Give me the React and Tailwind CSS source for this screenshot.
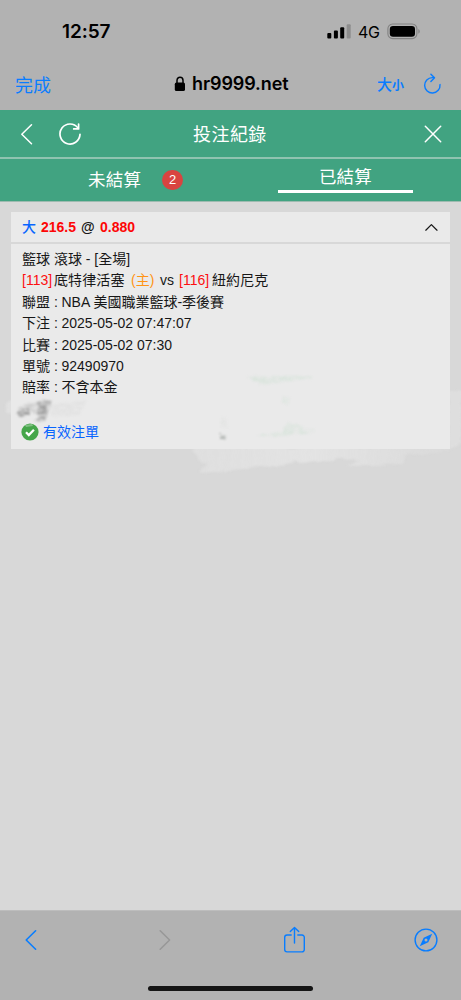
import React from "react";

const stroke = { fill: "none", stroke: "currentColor", strokeLinecap: "round", strokeLinejoin: "round" };

function StatusBar() {
  return (
    <div className="flex h-[62px] items-center pl-[62px] text-black">
      <span className="w-[265px] pt-[2px] font-[Inter,sans-serif] text-[19px] leading-6 font-semibold tracking-[-0.1px] whitespace-nowrap">12:57</span>
      <svg className="h-4 w-[25px] shrink-0" viewBox="0 0 25 16" fill="currentColor">
        <rect x="0.3" y="10" width="4" height="5.5" rx="1" />
        <rect x="6.9" y="7.5" width="4" height="8" rx="1" />
        <rect x="13.2" y="4.2" width="4" height="11.3" rx="1" />
        <rect x="19.7" y="1.2" width="4" height="14.3" rx="1" fill="#8d8d8d" />
      </svg>
      <span className="ml-[6px] w-[29px] pt-px font-[Inter,sans-serif] text-[16px] leading-5 font-normal tracking-[-0.3px]">4G</span>
      <svg className="h-[17px] w-[35px] shrink-0" viewBox="0 0 35 17">
        <rect x="0.9" y="1" width="29" height="14.6" rx="4.8" fill="none" stroke="#828282" strokeWidth="1.1" />
        <rect x="2.8" y="2.9" width="25.2" height="10.8" rx="3.2" fill="#000" />
        <path d="M31.4 6v4.8c1.8-.8 1.8-4 0-4.8z" fill="#828282" />
      </svg>
    </div>
  );
}

function AddressBar() {
  return (
    <div className="flex h-12 items-center pb-[4px] pl-[15px] font-['Noto_Sans_CJK_TC',sans-serif] text-[#0a7dff]">
      <span className="w-[159px] pb-px text-[18px] leading-6">完成</span>
      <svg className="h-[16px] w-[12px] shrink-0 text-black" viewBox="0 0 12 16">
        <path d="M3 7V4.4a3 3.2 0 0 1 6 0V7" {...stroke} strokeWidth="1.5" />
        <rect x="0.8" y="6.6" width="10.2" height="8.4" rx="1.6" fill="currentColor" />
      </svg>
      <span className="ml-[6px] w-[185px] font-[Inter,sans-serif] text-[18px] leading-6 font-semibold tracking-[-0.1px] text-black">hr9999.net</span>
      <span className="flex w-[46px] items-baseline leading-6 font-medium">
        <span className="text-[15px]">大</span>
        <span className="text-[12px] font-bold">小</span>
      </span>
      <svg className="h-[22px] w-[19px] shrink-0" viewBox="0 0 19 22" {...stroke} strokeWidth="1.45">
        <path d="M17 11.6A7.7 7.7 0 1 1 9.3 4.6h1.8" />
        <path d="M7.9 1.3l3.6 3.5-3.6 3.6" />
      </svg>
    </div>
  );
}

function PageHeader() {
  return (
    <header className="flex h-[49px] items-center border-b-2 border-[#8fc3b0] pl-[20px] text-white">
      <svg className="h-6 w-[14px]" viewBox="0 0 14 24" {...stroke} strokeWidth="1.5">
        <path d="M11.5 2.8L1.8 12.2l9.7 9.5" />
      </svg>
      <svg className="ml-[24px] h-6 w-6" viewBox="0 0 24 24" {...stroke} strokeWidth="1.7">
        <path d="M22 12.4A10 10 0 1 1 20 6" />
        <path d="M20.6 2v4.9h-4.9" />
      </svg>
      <h1 className="ml-[111px] w-[231px] pb-[2px] font-['Noto_Sans_CJK_TC',sans-serif] text-[18px] leading-6 tracking-[0.45px] font-normal">投注紀錄</h1>
      <svg className="h-[18px] w-[18px]" viewBox="0 0 18 18" {...stroke} strokeWidth="1.5">
        <path d="M1.3 1.3l15.4 15.4M16.7 1.3L1.3 16.7" />
      </svg>
    </header>
  );
}

function Tabs() {
  return (
    <nav className="flex h-[43px] border-b border-[#9ebbb0] font-['Noto_Sans_CJK_TC',sans-serif] text-[17.5px] text-white">
      <div className="flex w-[230px] items-center pl-[88px]">
        <span className="w-[74px] pb-[3px] leading-6 tracking-[0.25px]">未結算</span>
        <span className="flex h-5 w-[21px] items-center justify-center rounded-full bg-[#d94440] font-['Liberation_Sans',sans-serif] text-[13px] leading-5">2</span>
      </div>
      <div className="flex w-[231px] flex-col items-center pt-[5px]">
        <span className="leading-6 tracking-[0.25px]">已結算</span>
        <span className="mt-[2px] h-[3px] w-[135px] bg-white" />
      </div>
    </nav>
  );
}

const details = [
  ["聯盟", "NBA 美國職業籃球-季後賽"],
  ["下注", "2025-05-02 07:47:07"],
  ["比賽", "2025-05-02 07:30"],
  ["單號", "92490970"],
  ["賠率", "不含本金"],
];

function Smudges() {
  return (
    <svg className="pointer-events-none h-[290px] w-[461px]" viewBox="0 200 461 290">
      <defs>
        <filter id="edge" x="-10%" y="-40%" width="120%" height="180%" colorInterpolationFilters="sRGB">
          <feTurbulence type="fractalNoise" baseFrequency="0.06 0.2" numOctaves="3" seed="7" result="n" />
          <feDisplacementMap in="SourceGraphic" in2="n" scale="7" xChannelSelector="R" yChannelSelector="G" />
          <feGaussianBlur stdDeviation="1" />
        </filter>
        <filter id="grain" x="-20%" y="-40%" width="140%" height="180%" colorInterpolationFilters="sRGB">
          <feTurbulence type="fractalNoise" baseFrequency="0.15 0.4" numOctaves="3" seed="4" result="n" />
          <feDisplacementMap in="SourceGraphic" in2="n" scale="4" xChannelSelector="R" yChannelSelector="G" result="d" />
          <feColorMatrix in="n" type="matrix" values="0 0 0 0 0  0 0 0 0 0  0 0 0 0 0  2 0 0 0 -0.35" result="m" />
          <feComposite in="d" in2="m" operator="in" />
          <feGaussianBlur stdDeviation="0.8" />
        </filter>
        <linearGradient id="fade" x1="0" y1="0" x2="1" y2="0">
          <stop offset="0" stopColor="#e1e1e1" stopOpacity=".75" />
          <stop offset=".45" stopColor="#e3e3e3" />
          <stop offset=".75" stopColor="#e0e0e0" stopOpacity=".8" />
          <stop offset="1" stopColor="#dedede" stopOpacity=".3" />
        </linearGradient>
        <clipPath id="outside">
          <path d="M0 200h461v290H0zM11 212v237h439V212z" clipRule="evenodd" />
        </clipPath>
      </defs>
      <g clipPath="url(#outside)">
        <g filter="url(#edge)">
          <path d="M194 447H452l-4 5-42 3-4 9-54 2 12-7-64 3-22 5-75 5 8-8-9-4z" fill="url(#fade)" />
          <path d="M449 391l9-2 3 3v52l-12 4z" fill="#e0e0e0" opacity=".75" />
          <path d="M6 403l8-5v19l-7-5z" fill="#e2e2e2" opacity=".8" />
        </g>
      </g>
      <g filter="url(#grain)">
        <path d="M20 405l30-5 2 1-5 12-13 1-4-4-12 2z" fill="#b4b4b4" opacity=".55" />
        <path d="M39 401l13-1-4 13-3 8-11 1 3-8z" fill="#8c8c8c" opacity=".75" />
        <path d="M17 411l12-3 1 6-11 3z" fill="#808080" opacity=".8" />
        <path d="M50 405l37-5-8 15-27 1z" fill="#d4d4d4" opacity=".35" />
        <path d="M220 433l5 2 1 4-6-1z" fill="#b0b4b1" />
        <path d="M221 416l5 2 2 10-7-1z" fill="#dfe1e0" opacity=".6" />
        <path d="M246 377l65-2 1 3-22 3-30 4-2-3z" fill="#c9dfcf" opacity=".5" />
        <path d="M256 436l28-5 3-8 15 3 1 4 12-1-2 3-38 4z" fill="#c9dfcf" opacity=".5" />
        <path d="M283 396l7 2-2 7-5-2z" fill="#d6e4da" opacity=".5" />
      </g>
      <path d="M25 425l7-1 1 2-7 1z" fill="#dce8dd" opacity=".4" />
    </svg>
  );
}

function BetCard() {
  return (
    <article className="mx-[11px] bg-[#eaeaea] font-['Liberation_Sans','Noto_Sans_CJK_TC',sans-serif] text-[14px] text-[#171717]">
      <div className="flex h-[32px] items-center border-b-2 border-[#d8d8d8] pl-[11px] font-bold whitespace-nowrap">
        <span className="w-[19px] font-medium text-[#0865ff]">大</span>
        <span className="w-[40px] text-[#fd0606]">216.5</span>
        <span className="w-[19px] text-[14px]">@</span>
        <span className="w-[325px] text-[#fd0606]">0.880</span>
        <svg className="h-[9px] w-[13px]" viewBox="0 0 13 9" {...stroke} strokeWidth="1.25">
          <path d="M0.8 7.2l5.6-5.6 5.6 5.6" />
        </svg>
      </div>
      <div className="flex h-[205px] flex-col pt-[5px] pl-[11px] leading-[21.4px] whitespace-nowrap">
        <div className="h-[21.4px] shrink-0">籃球 滾球 - [全場]</div>
        <div className="flex h-[21.4px] shrink-0">
          <span className="w-[32px] text-[#fd1010]">[113]</span>
          <span className="w-[77px] tracking-[0.1px]">底特律活塞</span>
          <span className="w-[29px] text-[#ff9416]">(主)</span>
          <span className="w-[19px]">vs</span>
          <span className="w-[33px] text-[#fd1010]">[116]</span>
          <span className="tracking-[0.1px]">紐約尼克</span>
        </div>
        {details.map(([label, value]) => (
          <div key={label} className="flex h-[21.4px] shrink-0">
            <span className="w-[32px]">{label}</span>
            <span className="w-[7.5px]">:</span>
            <span>{value}</span>
          </div>
        ))}
        <div className="mt-[23px] flex h-[21.4px] items-center text-[#0865ff]">
          <svg className="-ml-px h-[18px] w-[18px]" viewBox="0 0 18 18">
            <circle cx="9" cy="9" r="8.6" fill="#45a64a" />
            <path d="M5 9.2l2.8 2.8 5.1-5.3" fill="none" stroke="#fff" strokeWidth="2.3" />
          </svg>
          <span className="ml-[4px]">有效注單</span>
        </div>
      </div>
    </article>
  );
}

function BottomBar() {
  return (
    <footer className="h-[90px] border-t border-[#bdbdbd] bg-[#b2b2b2] text-[#087dff]">
      <div className="flex h-[58px] items-center pl-[24px]">
        <svg className="h-[22px] w-[14px]" viewBox="0 0 14 22" {...stroke} strokeWidth="1.6">
          <path d="M11.6 1.8L2.2 11l9.4 9.2" />
        </svg>
        <svg className="ml-[120px] h-[22px] w-[14px] text-[#989898]" viewBox="0 0 14 22" {...stroke} strokeWidth="1.6">
          <path d="M2.2 1.8l9.4 9.2-9.4 9.2" />
        </svg>
        <svg className="ml-[111px] h-[28px] w-[23px]" viewBox="0 0 23 28" {...stroke} strokeWidth="1.4">
          <path d="M8.2 9H4a2.3 2.3 0 0 0-2.3 2.3v12.3A2.3 2.3 0 0 0 4 25.9h15a2.3 2.3 0 0 0 2.3-2.3V11.3A2.3 2.3 0 0 0 19 9h-4.2" />
          <path d="M11.5 17V1.5M7.3 5.6l4.2-4.1 4.2 4.1" />
        </svg>
        <svg className="ml-[108px] h-6 w-6" viewBox="0 0 24 24">
          <circle cx="12" cy="12" r="10.9" fill="none" stroke="currentColor" strokeWidth="1.4" />
          <path d="M18.2 5.8l-3.9 8.4-8.5 4 3.9-8.5z" fill="currentColor" />
          <circle cx="12" cy="12" r="1.5" fill="#b2b2b2" />
        </svg>
      </div>
      <div className="mx-auto mt-[17px] h-[5px] w-[165px] rounded-full bg-[#151515]" />
    </footer>
  );
}

export default function App() {
  return (
    <div className="flex h-[1000px] w-[461px] flex-col overflow-hidden bg-[#b2b2b2]">
      <StatusBar />
      <AddressBar />
      <div className="h-[92px] shrink-0 bg-[#41a381]">
        <PageHeader />
        <Tabs />
      </div>
      <main className="relative flex-1 bg-[#d8d8d8] pt-[10px]">
        <BetCard />
        <div className="pointer-events-none absolute -top-[2px] left-0">
          <Smudges />
        </div>
      </main>
      <BottomBar />
    </div>
  );
}
